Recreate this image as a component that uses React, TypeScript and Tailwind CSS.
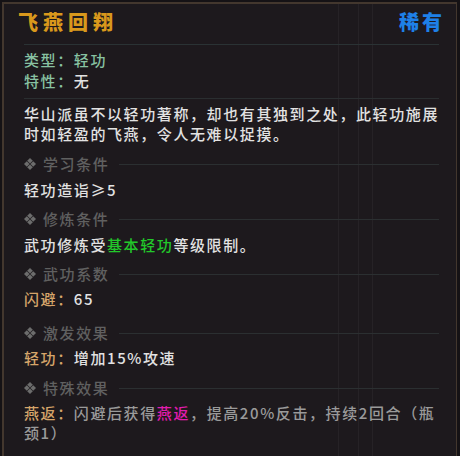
const font = "font-['Noto_Sans_CJK_SC',sans-serif]";

function Diamonds() {
  return (
    <svg width="12" height="12" viewBox="0 0 12 12" className="mr-[7px] shrink-0" fill="#6c6c6c">
      <path d="M6 0 L8.8 2.8 L6 5.6 L3.2 2.8 Z" />
      <path d="M2.8 3.2 L5.6 6 L2.8 8.8 L0 6 Z" />
      <path d="M9.2 3.2 L12 6 L9.2 8.8 L6.4 6 Z" />
      <path d="M6 6.4 L8.8 9.2 L6 12 L3.2 9.2 Z" />
    </svg>
  );
}

function SectionHeader({ title, className }: { title: string; className: string }) {
  return (
    <div className={`flex items-center h-5 ${className}`}>
      <Diamonds />
      <span className="text-[#606060]">{title}</span>
      <div className="ml-[10px] h-px flex-1 bg-[#2b2f31]" />
    </div>
  );
}

export default function App() {
  return (
    <div className={`w-[460px] h-[456px] overflow-hidden bg-[#151215] pl-[2px] pt-[2px] ${font}`}>
      <div className="relative h-full w-[455px] border-l-2 border-t-2 border-r border-[#43372e] bg-[#1d191d]">
        {/* faint lines bleeding through from the window underneath */}
        <div className="absolute top-0 bottom-0 left-[334px] w-px bg-[#262226]" />
        <div className="absolute top-0 bottom-0 left-[354px] w-px bg-[#262226]" />
        <div className="absolute top-0 bottom-0 left-[368px] w-px bg-[#262226]" />

        <div className="relative flex flex-col pl-[20px] pr-[17px] pt-[6px] text-[15px] font-medium leading-5 tracking-[1.6px] text-[#e2e2e2]">
          <div className="-ml-[6px] -mr-[6px] flex h-6 items-center justify-between">
            <span className="text-[20px] font-black tracking-[5px] text-[#d9981c]">飞燕回翔</span>
            <span className="text-[20px] font-black tracking-[3px] text-[#1e80e8]">稀有</span>
          </div>
          <div className="mt-[10px] h-px bg-[#2a3234]" />

          <div className="mt-[5px] text-[#88c2a2]">类型：轻功</div>
          <div className="mt-px">
            <span className="text-[#88c2a2]">特性：</span>无
          </div>
          <div className="mt-[7px] h-px bg-[#2a2e30]" />

          <div className="mt-[5px]">
            华山派虽不以轻功著称，却也有其独到之处，此轻功施展
            <br />
            时如轻盈的飞燕，令人无难以捉摸。
          </div>

          <SectionHeader title="学习条件" className="mt-[10px]" />
          <div className="mt-[6px]">轻功造诣≥5</div>

          <SectionHeader title="修炼条件" className="mt-[9px]" />
          <div className="mt-[6px]">
            武功修炼受<span className="text-[#22c82a]">基本轻功</span>等级限制。
          </div>

          <SectionHeader title="武功系数" className="mt-[9px]" />
          <div className="mt-[5px]">
            <span className="text-[#d6a56a]">闪避：</span>65
          </div>

          <SectionHeader title="激发效果" className="mt-[14px]" />
          <div className="mt-[5px]">
            <span className="text-[#d6a56a]">轻功：</span>增加15%攻速
          </div>

          <SectionHeader title="特殊效果" className="mt-[10px]" />
          <div className="mt-[5px] text-[#9a9a9a]">
            <span className="text-[#d6a56a]">燕返：</span>闪避后获得
            <span className="text-[#e01cae]">燕返</span>，提高20%反击，持续2回合（瓶
            <br />
            颈1）
          </div>
        </div>
      </div>
    </div>
  );
}
